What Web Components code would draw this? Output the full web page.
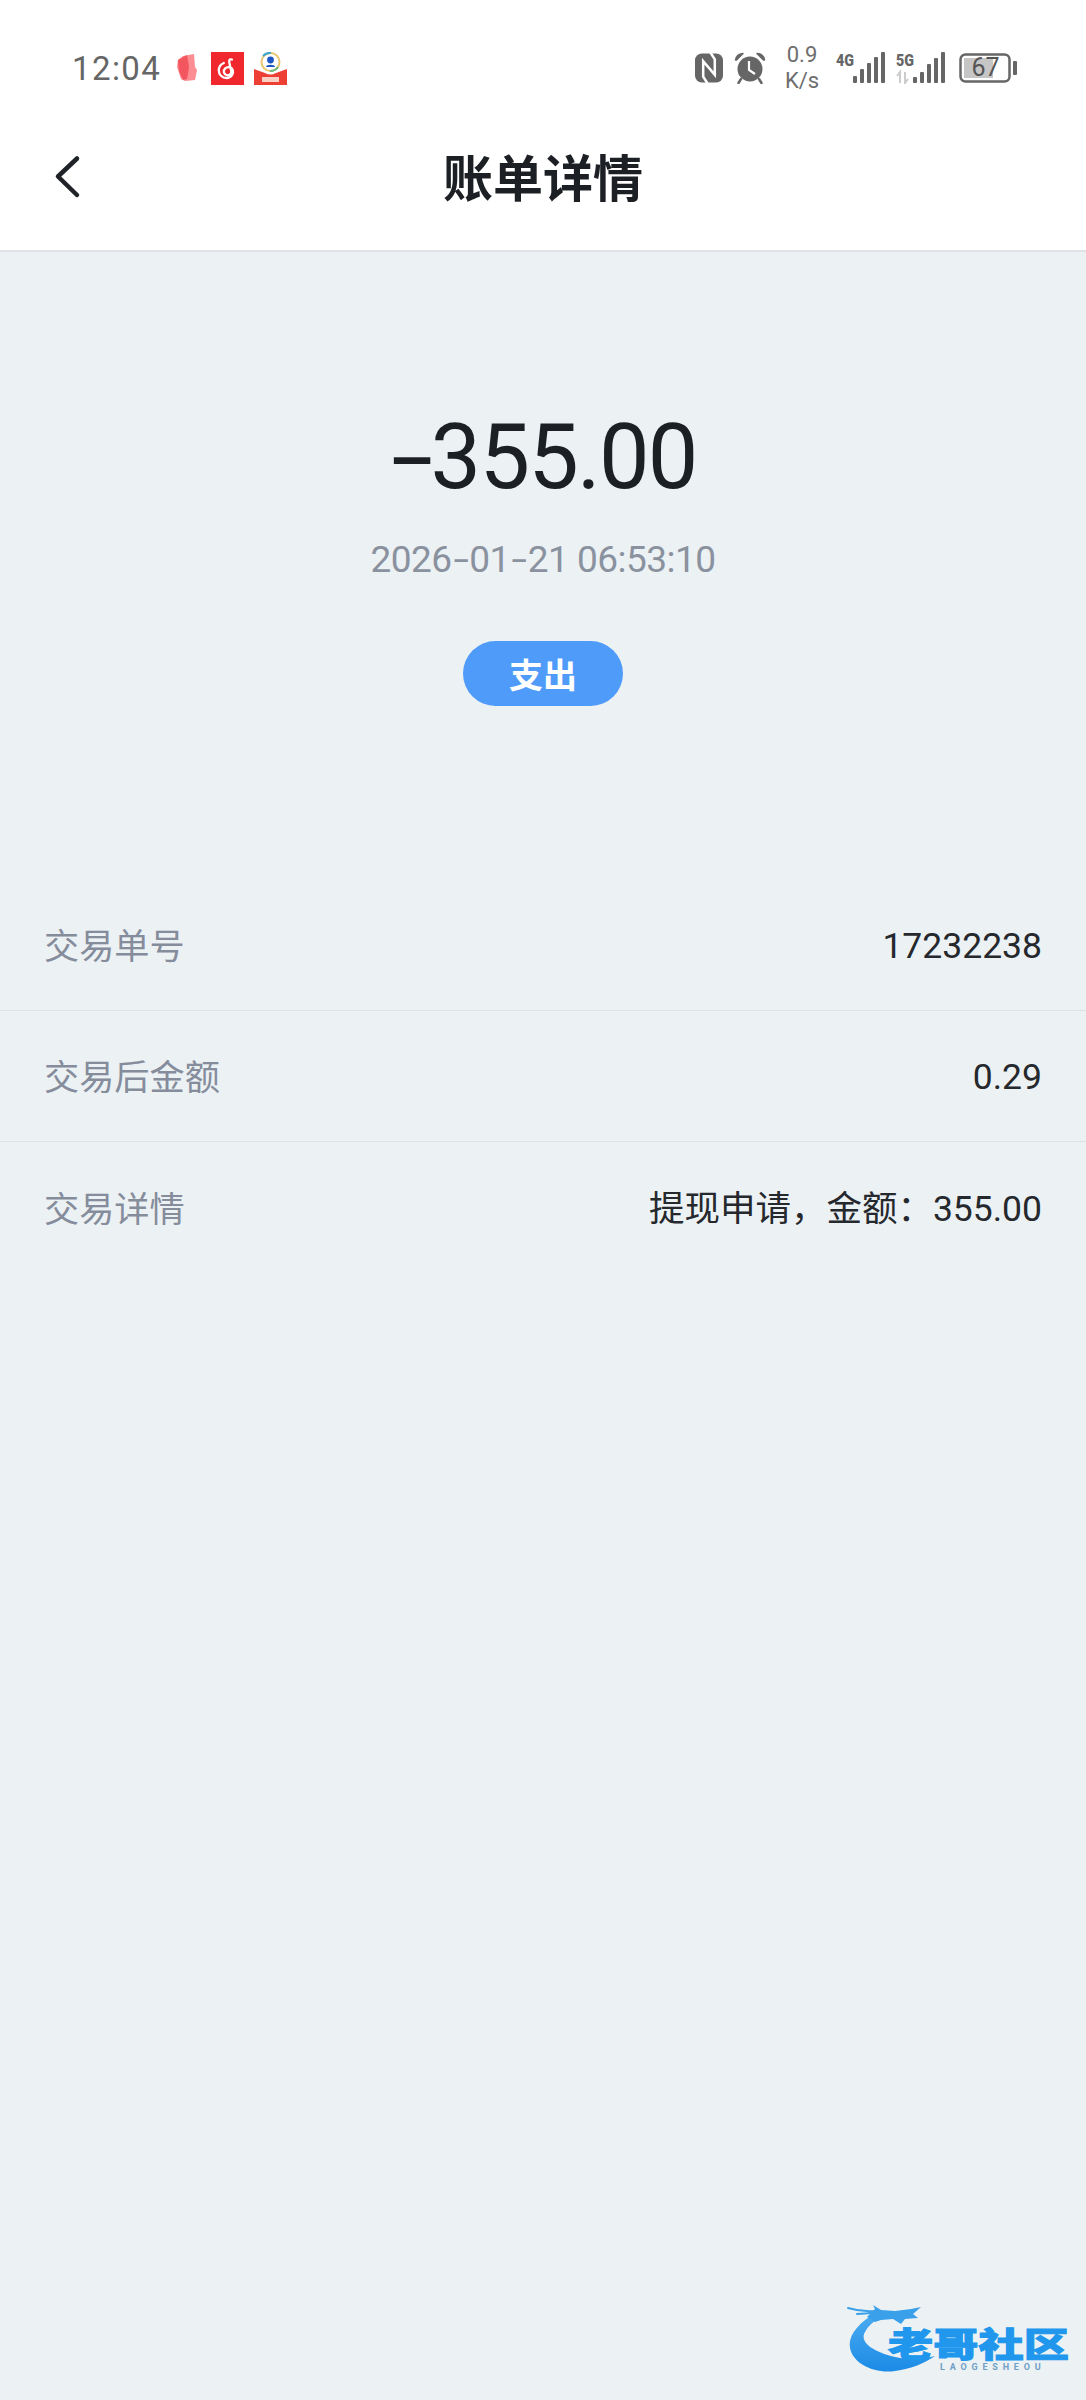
<!DOCTYPE html>
<html lang="zh">
<head>
<meta charset="utf-8">
<title>账单详情</title>
<style>
  html, body { margin: 0; padding: 0; }
  body { width: 1086px; height: 2400px; overflow: hidden; background: #ecf1f4; font-family: Roboto, "Noto Sans CJK SC", sans-serif; }
</style>
</head>
<body>
<bill-page>
  <status-bar slot="top"></status-bar>
  <nav-header slot="top" title="账单详情"></nav-header>
  <bill-summary amount="-355.00" time="2026-01-21 06:53:10" tag="支出"></bill-summary>
  <bill-row label="交易单号" value="17232238"></bill-row>
  <bill-row label="交易后金额" value="0.29"></bill-row>
  <bill-row label="交易详情" value="提现申请，金额：355.00" last></bill-row>
  <site-mark slot="mark"></site-mark>
</bill-page>

<script>
class BillPage extends HTMLElement {
  constructor() {
    super()
    this.attachShadow({ mode: 'open' })
    this.shadowRoot.innerHTML = `
      <style>
        :host { display: block; position: relative; width: 1086px; height: 2400px; background: #ecf1f4; }
        .top { background: #fff; }
      </style>
      <div class="top"><slot name="top"></slot></div>
      <slot></slot>
      <slot name="mark"></slot>
    `
  }
}

class StatusBar extends HTMLElement {
  constructor() {
    super()
    this.attachShadow({ mode: 'open' })
    this.shadowRoot.innerHTML = `
      <style>
        :host { display: flex; align-items: center; justify-content: space-between; height: 115px; padding: 21px 69px 0 72px; box-sizing: border-box; color: #666; font-family: Roboto, sans-serif; }
        .left, .right { display: flex; align-items: center; }
        .time { font-size: 33px; letter-spacing: 1.4px; margin-right: 14px; }
        .left svg { margin-right: 12px; display: block; }
        .right svg { display: block; }
        .speed { font-size: 22px; line-height: 26px; text-align: center; width: 36px; margin: 0 16px 0 18px; color: #6e6e6e; }
        .speed div { white-space: nowrap; }
        .sig { margin-right: 10px; }
        .batt { position: relative; width: 58px; height: 30px; }
        .batt span { position: absolute; left: 6px; right: 11px; top: 0; line-height: 30px; text-align: center; font-size: 25px; color: #555; }
      </style>
      <div class="left">
        <span class="time">12:04</span>
        <svg width="24" height="30" viewBox="0 0 24 30">
          <path d="M8 3 L19 1 L20 14 L22 17 L20 27 L10 28 L6 26 L2 14 L3 7Z" fill="#fb8d93"/>
          <path d="M3 7 L12 2 L14 14 L12 26 L8 27 L4 18Z" fill="#f4565f"/>
        </svg>
        <svg width="33" height="33" viewBox="0 0 33 33" style="margin-right:9px">
          <rect width="33" height="33" fill="#f0282d"/>
          <path d="M21 7.500c-3-.8-3 1-2.600 3.500l1.800 8c.5 3-2.200 4.600-4.600 4-3-.7-3.600-4.600-1.400-6.600 2.500-2.200 6.600-1.400 7.600 1.600 1.200 3.700-1.500 8-6.200 8-4.600 0-7.800-3.400-7.800-7.500 0-3.500 2-6.300 5-7.500" fill="none" stroke="#fff" stroke-width="2.300" stroke-linecap="round"/>
        </svg>
        <svg width="35" height="33" viewBox="0 0 35 33">
          <circle cx="17.500" cy="10" r="9" fill="none" stroke="#e9c66c" stroke-width="2"/>
          <path d="M10 4a9 9 0 0 1 8-3" fill="none" stroke="#44a3c9" stroke-width="2"/>
          <path d="M25 15a9 9 0 0 1-8 4" fill="none" stroke="#6cb97c" stroke-width="2"/>
          <circle cx="17.500" cy="8" r="3.400" fill="#1d55c4"/>
          <path d="M13 15c0-3 9-3 9 0z" fill="#1d55c4"/>
          <path d="M1 17 L12 21 Q17.500 24 23 21 L34 17 V33 H1Z" fill="#ee3f34"/>
          <rect x="9" y="25" width="17" height="5" fill="#fbd0c4"/>
        </svg>
      </div>
      <div class="right">
        <svg width="28" height="30" viewBox="0 0 29 30">
          <rect x="0" y="0" width="29" height="30" rx="7" fill="#666"/>
          <path d="M13 31 L8.500 24 V8 L20.500 22 V6 L16 -1" fill="none" stroke="#fff" stroke-width="2.600"/>
        </svg>
        <svg width="32" height="32" viewBox="0 0 32 32" style="margin-left:11px">
          <circle cx="16" cy="17" r="12.500" fill="#666"/>
          <path d="M1.500 8 Q2.500 2 9 1.500 L2.500 8Z M30.500 8 Q29.500 2 23 1.500 L29.500 8Z" fill="#666" stroke="#666" stroke-width="1.500" stroke-linejoin="round"/>
          <path d="M7 27 L4.500 31 M25 27 L27.500 31" stroke="#666" stroke-width="2.500" stroke-linecap="round"/>
          <path d="M15 9V18L21 22" fill="none" stroke="#fff" stroke-width="2.200"/>
        </svg>
        <div class="speed"><div>0.9</div><div>K/s</div></div>
        <svg class="sig" width="50" height="32" viewBox="0 0 50 32">
          <text x="0" y="14" font-family="Roboto, sans-serif" font-size="16" font-weight="900" fill="#666" textLength="18" lengthAdjust="spacingAndGlyphs">4G</text>
          <g fill="#666"><rect x="17" y="24" width="4" height="7" rx="1"/><rect x="24" y="17" width="4" height="14" rx="1"/><rect x="31" y="11" width="4" height="20" rx="1"/><rect x="38" y="5" width="4" height="26" rx="1"/><rect x="45" y="0" width="4" height="31" rx="1"/></g>
        </svg>
        <svg class="sig" width="50" height="32" viewBox="0 0 50 32" style="margin-right:13px">
          <text x="0" y="14" font-family="Roboto, sans-serif" font-size="16" font-weight="900" fill="#666" textLength="18" lengthAdjust="spacingAndGlyphs">5G</text>
          <path d="M4 31V20L1 24M9 20V31L12 27" fill="none" stroke="#ccc" stroke-width="2"/>
          <g fill="#666"><rect x="17" y="25" width="4" height="6" rx="1"/><rect x="24" y="20" width="4" height="11" rx="1"/><rect x="31" y="12" width="4" height="19" rx="1"/><rect x="38" y="6" width="4" height="25" rx="1"/><rect x="45" y="0" width="4" height="31" rx="1"/></g>
        </svg>
        <div class="batt">
          <svg width="58" height="30" viewBox="0 0 58 30">
            <rect x="1.500" y="1.500" width="49" height="27" rx="5" fill="#fff" stroke="#666" stroke-width="2.500"/>
            <rect x="5" y="5" width="29" height="20" fill="#c6c6c6"/>
            <rect x="54" y="8" width="4" height="14" rx="1" fill="#666"/>
          </svg>
          <span>67</span>
        </div>
      </div>
    `
  }
}

class NavHeader extends HTMLElement {
  constructor() {
    super()
    this.attachShadow({ mode: 'open' })
    this.shadowRoot.innerHTML = `
      <style>
        :host { display: flex; align-items: center; justify-content: center; position: relative; height: 137px; box-sizing: border-box; padding-bottom: 15px; border-bottom: 2px solid #dfe3e8; background: #fff; }
        h1 { margin: 0; font: 700 50px/1.2 "Noto Sans CJK SC", sans-serif; color: #1c1f23; }
        svg { position: absolute; left: 53px; top: 40px; }
      </style>
      <svg width="28" height="44" viewBox="0 0 28 44"><path d="M24 3.500 L5 21.500 L24 40" fill="none" stroke="#1f2226" stroke-width="4.500" stroke-linecap="round" stroke-linejoin="round"/></svg>
      <h1>${this.getAttribute('title')}</h1>
    `
  }
}

class BillSummary extends HTMLElement {
  constructor() {
    super()
    this.attachShadow({ mode: 'open' })
    this.shadowRoot.innerHTML = `
      <style>
        :host { display: flex; flex-direction: column; align-items: center; height: 628px; box-sizing: border-box; padding-top: 146px; font-family: Roboto, sans-serif; }
        .amount { font-size: 90px; line-height: 120px; color: #1c1f23; letter-spacing: -1.8px; white-space: nowrap; }
        .amount .d { display: inline-block; transform: scaleX(1.7); margin: 0 9px; }
        .time { font-size: 37px; line-height: 44px; color: #8a919f; margin-top: 20px; letter-spacing: -.5px; white-space: nowrap; }
        .time .d { display: inline-block; transform: scaleX(1.5); margin: 0 4px; }
        .tag { width: 160px; height: 65px; border-radius: 33px; background: #4f9bfa; color: #fff; display: flex; align-items: center; justify-content: center; font: 700 34px "Noto Sans CJK SC", sans-serif; margin-top: 59px; }
      </style>
      <div class="amount">${this.dash(this.getAttribute('amount'))}</div>
      <div class="time">${this.dash(this.getAttribute('time'))}</div>
      <div class="tag">${this.getAttribute('tag')}</div>
    `
  }

  // the app font has a longer dash than Roboto
  dash(text) {
    return text.replace(/-/g, '<span class="d">-</span>')
  }
}

class BillRow extends HTMLElement {
  constructor() {
    super()
    this.attachShadow({ mode: 'open' })
    this.shadowRoot.innerHTML = `
      <style>
        :host { display: flex; align-items: center; justify-content: space-between; height: 131px; box-sizing: border-box; padding: 0 44px; border-bottom: 1px solid #dde2e6; font-size: 35.5px; line-height: 48px; }
        :host([last]) { border-bottom: none; }
        .label { color: #858c9b; font-family: "Noto Sans CJK SC", sans-serif; font-size: 35.2px; margin-bottom: 2px; }
        .value { color: #25282c; font-family: Roboto, "Noto Sans CJK SC", sans-serif; margin-top: 2px; }
      </style>
      <span class="label">${this.getAttribute('label')}</span>
      <span class="value">${this.getAttribute('value')}</span>
    `
  }
}

class SiteMark extends HTMLElement {
  constructor() {
    super()
    this.attachShadow({ mode: 'open' })
    this.shadowRoot.innerHTML = `
      <style>
        :host { display: block; position: absolute; left: 845px; top: 2300px; width: 230px; height: 80px; }
        svg { position: absolute; left: 0; top: 0; }
        .cn { position: absolute; left: 43px; top: 25px; font: 900 34px/36px "Noto Sans CJK SC", sans-serif; white-space: nowrap; color: #2097ec; -webkit-text-stroke: 1px #2097ec; transform: scaleX(1.33); transform-origin: left center; }
        .en { position: absolute; left: 95px; top: 62px; font: 700 9px/10px Roboto, sans-serif; letter-spacing: 4.8px; color: #6f9fc6; white-space: nowrap; }
      </style>
      <svg width="230" height="80" viewBox="0 0 230 80">
        <defs><linearGradient id="g" x1="0" y1="0" x2="0" y2="1"><stop offset="0" stop-color="#4aaaf0"/><stop offset="1" stop-color="#1b8be6"/></linearGradient></defs>
        <path d="M26 16 C10 26 3 38 5 48 C8 64 30 74 50 71 C66 69 80 63 90 56 C76 60 60 60 46 56 C28 51 14 42 20 32 C23 26 28 22 34 18 Z" fill="url(#g)"/>
        <path d="M22 17 L30 9 L28 5 L36 10 L50 11 L66 9 L76 7 L68 14 L73 18 L60 19 L56 24 L48 19 L36 20 L30 22Z" fill="#3aa0ea"/>
        <path d="M3 8 Q16 12 30 11 M12 14 L28 13" fill="none" stroke="#3aa0ea" stroke-width="2" stroke-linecap="round"/>
      </svg>
      <div class="cn">老哥社区</div>
      <div class="en">LAOGESHEOU</div>
    `
  }
}

customElements.define('bill-page', BillPage)
customElements.define('status-bar', StatusBar)
customElements.define('nav-header', NavHeader)
customElements.define('bill-summary', BillSummary)
customElements.define('bill-row', BillRow)
customElements.define('site-mark', SiteMark)
</script>
</body>
</html>
